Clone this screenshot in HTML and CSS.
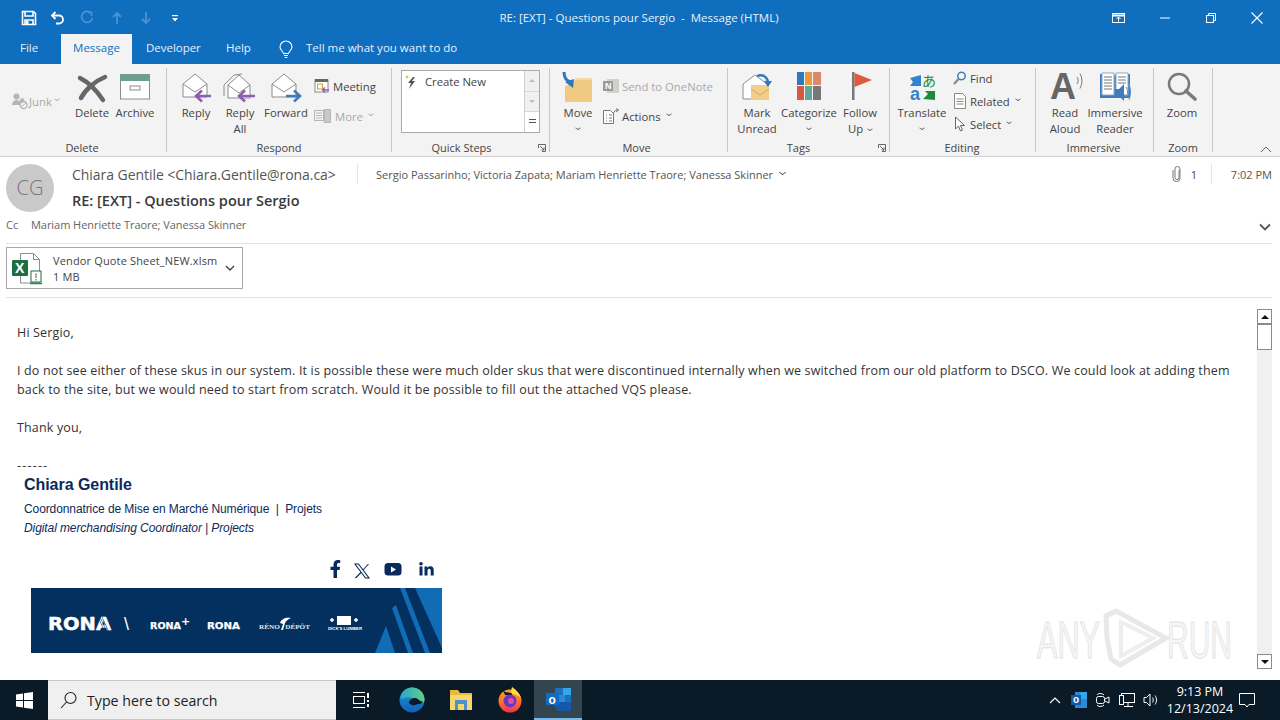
FILE: index.html
```html
<!DOCTYPE html>
<html lang="en">
<head>
<meta charset="utf-8">
<title>RE: [EXT] - Questions pour Sergio - Message (HTML)</title>
<link rel="stylesheet" href="styles.css">
</head>
<body>
<div class="window">
  <header class="titlebar">
    <div class="qat">
      <svg class="qat-save" width="16" height="16" viewBox="0 0 16 16" fill="none" stroke="#fff" stroke-width="1.6"><path d="M1.5 1.5h11l2 2v11h-13z"/><path d="M4 2v4h8V2M4 14.5V10h8v4.5" /><rect x="5" y="11" width="2.5" height="3.5" fill="#fff" stroke="none"/></svg>
      <svg class="qat-undo" width="16" height="16" viewBox="0 0 16 16" fill="none" stroke="#fff" stroke-width="1.8"><path d="M5.5 2 2 5.5 5.5 9"/><path d="M2.5 5.5h6.5a4 4 0 0 1 0 8H6"/></svg>
      <svg class="qat-redo" width="16" height="16" viewBox="0 0 16 16" fill="none" stroke="#4a93d2" stroke-width="1.7"><path d="M9 2.5h3.5V6"/><path d="M12 3A5.5 5.5 0 1 0 13.5 8"/></svg>
      <svg class="qat-up" width="12" height="14" viewBox="0 0 12 14" fill="none" stroke="#4a93d2" stroke-width="1.8"><path d="M6 13V2M2 6l4-4 4 4"/></svg>
      <svg class="qat-down" width="12" height="14" viewBox="0 0 12 14" fill="none" stroke="#4a93d2" stroke-width="1.8"><path d="M6 1v11M2 8l4 4 4-4"/></svg>
      <svg class="qat-more" width="8" height="8" viewBox="0 0 8 8" fill="#fff"><rect x="1" y="1" width="6" height="1.2"/><path d="M1 4h6L4 7.5z"/></svg>
    </div>
    <div class="title">RE: [EXT] - Questions pour Sergio &nbsp;-&nbsp; Message (HTML)</div>
    <div class="winctl">
      <svg class="win-pop" width="16" height="12" viewBox="0 0 16 12" fill="none" stroke="#fff"><rect x="1.5" y="1.5" width="12" height="9"/><path d="M1.5 3.5h12" stroke-width="2"/><path d="M7.5 9.5V5M5.5 7l2-2 2 2"/></svg>
      <svg width="12" height="12" viewBox="0 0 12 12" stroke="#fff"><path d="M1 6h10"/></svg>
      <svg width="12" height="12" viewBox="0 0 12 12" fill="none" stroke="#fff"><rect x="1.5" y="3.5" width="7" height="7"/><path d="M3.5 3.5v-2h7v7h-2"/></svg>
      <svg width="12" height="12" viewBox="0 0 12 12" stroke="#fff" stroke-width="1.1"><path d="M.5.5l11 11M11.500.5l-11 11"/></svg>
    </div>
  </header>

  <nav class="tabs">
    <span class="tab tab-file">File</span>
    <span class="tab tab-active">Message</span>
    <span class="tab tab-dev">Developer</span>
    <span class="tab tab-help">Help</span>
    <svg class="bulb" width="14" height="18" viewBox="0 0 14 18" fill="none" stroke="#fff" stroke-width="1.1"><path d="M4.500 12.500C4 10 1 9 1 6a6 6 0 0 1 12 0c0 3-3 4-3.500 6.500z"/><path d="M5 14.500h4M5.700 16.500h2.600"/></svg>
    <span class="tellme">Tell me what you want to do</span>
  </nav>

  <section class="ribbon">
    <div class="group g-delete">
      <div class="group-body">
        <div class="small-one dim junk">
          <svg width="18" height="18" viewBox="0 0 18 18" fill="#b5b5b5"><circle cx="5.500" cy="4.500" r="3"/><path d="M1 13c0-3 2-5 4.500-5S10 10 10 13z"/><circle cx="11" cy="8.500" r="2.300"/><circle cx="12.500" cy="13" r="3.500" fill="none" stroke="#b5b5b5" stroke-width="1.300"/><path d="M10 15l5-4" stroke="#b5b5b5"/></svg>
          <span>Junk</span><i class="caret"></i>
        </div>
        <div class="big w44">
          <svg class="ico" width="32" height="32" viewBox="0 0 32 32" fill="none" stroke="#666" stroke-width="4.500" stroke-linecap="round"><path d="M4 6c8 4 17 13 23 22"/><path d="M29 5C19 9 9 18 5 26"/></svg>
          <span>Delete</span>
        </div>
        <div class="big w42">
          <svg class="ico ico-arch" width="32" height="26" viewBox="0 0 32 26"><rect x="1.500" y="1" width="29" height="24" fill="#fff" stroke="#8c8c8c"/><rect x="1" y="0" width="30" height="7" fill="#6f9f8b"/><rect x="11" y="12" width="10" height="4" fill="none" stroke="#8c8c8c"/></svg>
          <span>Archive</span>
        </div>
      </div>
      <div class="group-label">Delete</div>
    </div>

    <div class="group g-respond">
      <div class="group-body">
        <div class="big w44">
          <svg class="ico" width="32" height="32" viewBox="0 0 32 32"><path d="M3 12 15 2l12 10v13H3z" fill="#fff" stroke="#8c8c8c"/><path d="M3 12l12 8 12-8" fill="none" stroke="#8c8c8c"/><path d="M17 24h14M22 18.500l-6 5.500 6 5.500" fill="none" stroke="#8e5fb0" stroke-width="2.600"/></svg>
          <span>Reply</span>
        </div>
        <div class="big w44">
          <svg class="ico" width="34" height="32" viewBox="0 0 34 32"><path d="M1 13 11 3l8-1" fill="none" stroke="#8c8c8c"/><path d="M1 13v11" fill="none" stroke="#8c8c8c"/><path d="M5 13 16 3l11 10v13H5z" fill="#fff" stroke="#8c8c8c"/><path d="M5 13l11 8 11-8" fill="none" stroke="#8c8c8c"/><path d="M17 24h15M22 18.500l-6 5.500 6 5.500" fill="none" stroke="#8e5fb0" stroke-width="2.600"/></svg>
          <span>Reply<br>All</span>
        </div>
        <div class="big w48">
          <svg class="ico" width="32" height="32" viewBox="0 0 32 32"><path d="M2 12 14 2l12 10v13H2z" fill="#fff" stroke="#8c8c8c"/><path d="M2 12l12 8 12-8" fill="none" stroke="#8c8c8c"/><path d="M16 24h14M24 18.500l6 5.500-6 5.500" fill="none" stroke="#3f7cb8" stroke-width="2.600"/></svg>
          <span>Forward</span>
        </div>
        <div class="small-col two">
          <div class="small">
            <svg width="16" height="16" viewBox="0 0 16 16"><rect x="1" y="2" width="13" height="12" fill="#fff" stroke="#888"/><rect x="1" y="1" width="13" height="3" fill="#666"/><rect x="3.500" y="6" width="5" height="5" fill="none" stroke="#d29b3a"/><path d="M8 12h7M11 9.500 8.500 12l2.500 2.500" fill="none" stroke="#8e5fb0" stroke-width="1.300"/></svg>
            <span>Meeting</span>
          </div>
          <div class="small dim">
            <svg width="18" height="16" viewBox="0 0 18 16" fill="none" stroke="#b5b5b5"><rect x=".5" y="2.500" width="9" height="10"/><path d="M2 5h6M2 7.500h6M2 10h6"/><rect x="10.500" y="1.500" width="6" height="13" fill="#c8c8c8"/></svg>
            <span>More</span><i class="caret"></i>
          </div>
        </div>
      </div>
      <div class="group-label">Respond</div>
    </div>

    <div class="group g-quick">
      <div class="quickbox">
        <div class="quick-list">
          <svg width="14" height="16" viewBox="0 0 14 16"><path d="M8 3 3 9h3l-2 6 6-8H7l3-4z" fill="#555"/><path d="M2 1l.7 1.500L4 3l-1.300.6L2 5l-.7-1.400L0 3l1.300-.5z" fill="#e0a94a"/></svg>
          <span>Create New</span>
        </div>
        <div class="quick-scroll">
          <b><i class="mini-up"></i></b>
          <b><i class="mini-down"></i></b>
          <b class="on"><i class="mini-more"></i></b>
        </div>
      </div>
      <div class="group-label">Quick Steps</div>
      <svg class="launcher" width="8" height="8" viewBox="0 0 8 8" fill="none" stroke="#666"><path d="M.5 4V.5H7.500V7.500H4M2 2l4 4M3.500 6H6V3.500"/></svg>
    </div>

    <div class="group g-move">
      <div class="group-body">
        <div class="big w52">
          <svg class="ico ico-top" width="32" height="32" viewBox="0 0 32 32"><path d="M13 6h17v10H13z" fill="#f4dba6"/><path d="M3 14l6-2 4-4h17v22H3z" fill="#f0ca80"/><path d="M2 0c0 5 2 9 7 10" fill="none" stroke="#2f78bd" stroke-width="3"/><path d="M3 10l9-3-1 9z" fill="#2f78bd"/></svg>
          <span>Move<i class="caret block"></i></span>
        </div>
        <div class="small-col two tight">
          <div class="small dim">
            <svg width="16" height="16" viewBox="0 0 16 16"><rect x="4" y="1" width="12" height="14" fill="#d0d0d0"/><rect x="0" y="3" width="10" height="10" fill="#9a9a9a"/><text x="2" y="11" class="mini-letter">N</text></svg>
            <span>Send to OneNote</span>
          </div>
          <div class="small">
            <svg width="16" height="16" viewBox="0 0 16 16" fill="none" stroke="#777"><path d="M.5 2.500h7l3 3v10H.5z" fill="#fff"/><path d="M3 7h1M6 7h3M3 10h1M6 10h3M3 13h1M6 13h3"/><path d="M10 6c1-3 3-4 5.500-4"/><path d="M13 .5l2.500 1.500L13 4"/></svg>
            <span>Actions</span><i class="caret"></i>
          </div>
        </div>
      </div>
      <div class="group-label">Move</div>
    </div>

    <div class="group g-tags">
      <div class="group-body">
        <div class="big w52">
          <svg class="ico" width="32" height="32" viewBox="0 0 32 32"><path d="M2 12 14 3l12 9v15H2z" fill="#fff" stroke="#8c8c8c"/><path d="M10 13h18v15H10z" fill="#f0cf8a"/><path d="M10 17l9 6 9-6" fill="none" stroke="#d6a75c"/><path d="M16 4c5-2 10 0 11 6" fill="none" stroke="#2f78bd" stroke-width="2.400"/><path d="M23 9h8l-4 6z" fill="#2f78bd"/></svg>
          <span>Mark<br>Unread</span>
        </div>
        <div class="big w52">
          <svg class="ico" width="24" height="28" viewBox="0 0 24 28"><rect width="7" height="13" fill="#2f78bd"/><rect x="8" width="7" height="13" fill="#e89a3c"/><rect x="16" width="8" height="13" fill="#d98a6c"/><rect y="14" width="7" height="14" fill="#d9573c"/><rect x="8" y="14" width="7" height="14" fill="#5fa898"/><rect x="16" y="14" width="8" height="14" fill="#777"/></svg>
          <span>Categorize<i class="caret block"></i></span>
        </div>
        <div class="big w50">
          <svg class="ico ico-flag" width="20" height="28" viewBox="0 0 20 28"><rect x="0" y="0" width="2.500" height="28" fill="#777"/><path d="M2.500 1 20 8 2.500 15z" fill="#dd5a3f"/></svg>
          <span>Follow<br>Up<i class="caret"></i></span>
        </div>
      </div>
      <div class="group-label">Tags</div>
      <svg class="launcher" width="8" height="8" viewBox="0 0 8 8" fill="none" stroke="#666"><path d="M.5 4V.5H7.500V7.500H4M2 2l4 4M3.500 6H6V3.500"/></svg>
    </div>

    <div class="group g-editing">
      <div class="group-body">
        <div class="big w52">
          <svg class="ico ico-tr" width="30" height="31" viewBox="0 0 30 31"><path d="M3 7l11-3v11H3l3-4z" fill="#2f84cc"/><text x="15" y="15" class="tr-ja">あ</text><text x="3" y="29" class="tr-a">a</text><path d="M16 28l5-5-3-3h10v9z" fill="#1f8a3c"/></svg>
          <span>Translate<i class="caret block"></i></span>
        </div>
        <div class="small-col three">
          <div class="small">
            <svg width="14" height="14" viewBox="0 0 14 14" fill="none"><circle cx="8.500" cy="5" r="3.700" stroke="#3f7cb8" stroke-width="1.500"/><path d="M1 13l4.500-5" stroke="#8a8a8a" stroke-width="2.200"/></svg>
            <span>Find</span>
          </div>
          <div class="small">
            <svg width="14" height="16" viewBox="0 0 14 16" fill="#fff" stroke="#888"><path d="M1.500.5h8l3 3v12h-11z"/><path d="M3.500 6h7M3.500 8.500h7M3.500 11h7" fill="none"/></svg>
            <span>Related</span><i class="caret"></i>
          </div>
          <div class="small">
            <svg width="14" height="16" viewBox="0 0 14 16" fill="#fff" stroke="#666"><path d="M2.500 1v12l3-3 2 5 2-1-2-4.500h4z"/></svg>
            <span>Select</span><i class="caret"></i>
          </div>
        </div>
      </div>
      <div class="group-label">Editing</div>
    </div>

    <div class="group g-immersive">
      <div class="group-body">
        <div class="big w50">
          <div class="readaloud">
            <span class="big-a">A</span>
            <svg width="8" height="18" viewBox="0 0 8 18" fill="none" stroke="#777"><path d="M1 5c1.500 2 1.500 5 0 7M4 1.500c2.500 4.500 2.500 10 0 15"/></svg>
          </div>
          <span>Read<br>Aloud</span>
        </div>
        <div class="big w50">
          <svg class="ico" width="32" height="30" viewBox="0 0 32 30"><path d="M1 2h14l1 2 1-2h14v24H1z" fill="#3f7cb8"/><path d="M3 1h12v22H3zM17 1h12v22H17z" fill="#fff" stroke="#8aa9c9"/><path d="M5 5h8M5 8h8M5 11h8M5 14h8M5 17h8M19 5h8M19 8h8M19 11h8" stroke="#777"/><path d="M16 17h4l5-5v17l-5-5h-4z" fill="#3f7cb8"/><path d="M27 15c2 3 2 7 0 10M30 12c2 5 2 11 0 16" fill="none" stroke="#5b94c9"/></svg>
          <span>Immersive<br>Reader</span>
        </div>
      </div>
      <div class="group-label">Immersive</div>
    </div>

    <div class="group g-zoom">
      <div class="group-body">
        <div class="big w50">
          <svg class="ico" width="30" height="30" viewBox="0 0 30 30" fill="none" stroke="#7a7a7a"><circle cx="12" cy="12" r="10" stroke-width="2.500"/><path d="M19 19l9 8" stroke-width="3.600" stroke-linecap="round"/></svg>
          <span>Zoom</span>
        </div>
      </div>
      <div class="group-label">Zoom</div>
    </div>

    <svg class="collapse" width="12" height="7" viewBox="0 0 12 7" fill="none" stroke="#666"><path d="M1 6l5-5 5 5"/></svg>
  </section>

  <section class="msg-head">
    <div class="head-top">
      <div class="avatar">CG</div>
      <div class="head-lines">
        <div class="line-sender">
          <span class="sender">Chiara Gentile &lt;Chiara.Gentile@rona.ca&gt;</span>
          <span class="vsep"></span>
          <span class="recipients">Sergio Passarinho; Victoria Zapata; Mariam Henriette Traore; Vanessa Skinner</span>
          <i class="caret dark"></i>
          <span class="meta">
            <svg width="10" height="16" viewBox="0 0 10 16" fill="none" stroke="#777"><path d="M7 4v7.500a2 2 0 0 1-4 0V3a2.500 2.500 0 0 1 5 .0v9a3.500 3.500 0 0 1-7 0V4"/></svg>
            <span class="count">1</span>
            <span class="vsep"></span>
            <span class="time">7:02 PM</span>
          </span>
        </div>
        <div class="subject">RE: [EXT] - Questions pour Sergio</div>
      </div>
    </div>
    <div class="cc-row">
      <span class="cc">Cc</span>
      <span class="cc-names">Mariam Henriette Traore; Vanessa Skinner</span>
      <svg class="cc-chev" width="12" height="8" viewBox="0 0 12 8" fill="none" stroke="#555" stroke-width="1.800"><path d="M1 1.500l5 5 5-5"/></svg>
    </div>
    <div class="attach-row">
      <div class="attach">
        <svg width="34" height="34" viewBox="0 0 34 34"><path d="M8.500 2.500h13l6 6v23.500h-19z" fill="#fff" stroke="#8c8c8c"/><path d="M21.500 2.500v6h6" fill="none" stroke="#8c8c8c"/><rect x="0" y="9" width="16" height="16" rx="1" fill="#1d6f42"/><text x="3" y="22" class="xl-x">X</text><rect x="19" y="20" width="10" height="11" fill="#fff" stroke="#1d6f42"/><path d="M24 22.500v4.500M24 28v1.500" stroke="#1d6f42"/><path d="M18 32.500h12" stroke="#1d8a5a" stroke-width="1.500"/></svg>
        <div class="attach-text">
          <div>Vendor Quote Sheet_NEW.xlsm</div>
          <div>1 MB</div>
        </div>
        <svg class="attach-chev" width="10" height="7" viewBox="0 0 10 7" fill="none" stroke="#444" stroke-width="1.400"><path d="M1 1l4 4 4-4"/></svg>
      </div>
    </div>
  </section>

  <main class="body">
    <article class="mail">
      <p>Hi Sergio,</p>
      <p>I do not see either of these skus in our system. It is possible these were much older skus that were discontinued internally when we switched from our old platform to DSCO. We could look at adding them back to the site, but we would need to start from scratch. Would it be possible to fill out the attached VQS please.</p>
      <p>Thank you,</p>
      <p class="dashes">------</p>
      <div class="sig">
        <div class="sig-name">Chiara Gentile</div>
        <div class="sig-role">Coordonnatrice de Mise en Marché Numérique &nbsp;|&nbsp; Projets</div>
        <div class="sig-role2">Digital merchandising Coordinator | Projects</div>
        <div class="social">
          <svg width="12" height="18" viewBox="0 0 12 18" fill="#0a2a5c"><path d="M3.500 18V10H.5V6.800h3V4.500C3.500 1.500 5.200 0 7.800 0c1.200 0 2.400.2 2.400.2v2.700H8.800c-1.400 0-1.800.8-1.800 1.700v2.200h3.100L9.600 10H7v8z"/></svg>
          <svg class="soc-x" width="16" height="16" viewBox="0 0 16 16" fill="none" stroke="#0a2a5c"><path d="M1 1h3.500l10.500 14h-3.500z" stroke-width="1.100"/><path d="M14.500 1 9 7M7 9.500 1.500 15" stroke-width="1.100"/></svg>
          <svg class="soc-yt" width="18" height="13" viewBox="0 0 18 13"><rect width="17" height="12.500" x=".5" rx="3.500" fill="#0a2a5c"/><path d="M7 3.500v6l5-3z" fill="#fff"/></svg>
          <svg class="soc-in" width="15" height="14" viewBox="0 0 15 14" fill="#0a2a5c"><rect x=".5" y="4.500" width="3" height="9"/><circle cx="2" cy="1.800" r="1.800"/><path d="M5.500 4.500h2.800v1.300C9 4.800 10 4.200 11.300 4.200c2.700 0 3.400 1.700 3.400 4.200v5.100h-3V9c0-1.100-.2-2.200-1.500-2.200S8.500 7.900 8.500 9v4.500h-3z"/></svg>
        </div>
        <svg class="banner" width="411" height="65" viewBox="0 0 411 65">
          <rect width="411" height="65" fill="#04305f"/>
          <path d="M384 0h27v60z" fill="#0f6cb5"/>
          <path d="M369 0h5l25 65h-5z" fill="#0f6cb5"/>
          <path d="M361 20l4-3 17 48h-5z" fill="#0f6cb5"/>
          <path d="M344 65l11-27 9 27z" fill="#0f6cb5"/>
          <text x="17" y="42" textLength="63" lengthAdjust="spacingAndGlyphs" class="b-rona">RONA</text>
          <path d="M73 42l-6-13 2 0 6 13zM77 42l-6-13" fill="none" stroke="#04305f" stroke-width=".6"/>
          <text x="93" y="42" class="b-slash">\</text>
          <text x="119" y="41" textLength="31" lengthAdjust="spacingAndGlyphs" class="b-small">RONA</text>
          <text x="150" y="37" class="b-plus">+</text>
          <text x="176" y="41" textLength="33" lengthAdjust="spacingAndGlyphs" class="b-small">RONA</text>
          <text x="228" y="41" textLength="51" lengthAdjust="spacingAndGlyphs" class="b-reno">RÉNO&#160;&#160;&#160;DÉPÔT</text>
          <path d="M249 35c1-4 6-6 11-5-3 1-5 3-6 5l-2 7h-2l2-6z" fill="#fff"/>
          <rect x="306" y="28" width="14" height="9" fill="#fff"/>
          <path d="M299 32h4M301 30v4M323 32h4M325 30v4" stroke="#fff" stroke-width="1.500"/>
          <text x="297" y="41.500" textLength="34" lengthAdjust="spacingAndGlyphs" class="b-dick">DICK'S LUMBER</text>
        </svg>
      </div>
    </article>
    <div class="scrollbar">
      <b class="sb-btn"><i class="mini-up dark"></i></b>
      <b class="sb-thumb"></b>
      <span class="sb-track"></span>
      <b class="sb-btn"><i class="mini-down dark"></i></b>
    </div>
    <svg class="watermark" width="210" height="70" viewBox="0 0 210 70">
      <text x="0" y="50" textLength="63" lengthAdjust="spacingAndGlyphs" class="wm">ANY</text>
      <path d="M70 30 69 8l10-5 50 27-46 27-9-6z" fill="none" stroke="#e8e8e8" stroke-width="5"/>
      <path d="M84 14v34l32-18z" fill="none" stroke="#eeeeee" stroke-width="4"/>
      <text x="130" y="50" textLength="65" lengthAdjust="spacingAndGlyphs" class="wm">RUN</text>
    </svg>
  </main>

  <footer class="taskbar">
    <div class="start">
      <svg width="17" height="17" viewBox="0 0 17 17" fill="#fff"><path d="M0 2.400 7 1.400V8H0zM8 1.300 17 0V8H8zM0 9h7v6.600L0 14.600zM8 9h9v8l-9-1.300z"/></svg>
    </div>
    <div class="search">
      <svg width="18" height="18" viewBox="0 0 18 18" fill="none" stroke="#222" stroke-width="1.100"><circle cx="10.500" cy="7" r="5.500"/><path d="M6.500 11 1 17"/></svg>
      <span>Type here to search</span>
    </div>
    <div class="tb-btn tb-first">
      <svg width="16" height="16" viewBox="0 0 16 16" fill="none" stroke="#fff"><path d="M0 .5h12M0 15.500h12"/><rect x=".5" y="4.500" width="11" height="7"/><path d="M15 1v5M15 8v2M15 12v3" stroke-width="2"/></svg>
    </div>
    <div class="tb-btn">
      <svg width="26" height="26" viewBox="0 0 26 26"><defs><linearGradient id="e1" x1="0" y1="0" x2="0" y2="1"><stop offset="0" stop-color="#1f9ad6"/><stop offset="1" stop-color="#0f5fb8"/></linearGradient><linearGradient id="e2" x1="0" y1="0" x2="1" y2="0"><stop offset="0" stop-color="#2aa6c8"/><stop offset="1" stop-color="#5fd08a"/></linearGradient></defs><circle cx="13" cy="13" r="12.500" fill="url(#e1)"/><path d="M1.500 11C3 4 8 .5 13 .5c7 0 12.500 5.500 12.500 12 0 2-.5 3-2 3.500-3 .8-4-1-6-3-2-2-8-4-12-2-2 1-3 1.500-4 0z" fill="url(#e2)"/><path d="M10 15c1-3 5-5 8-3.500 2 1 3 3 6 3-1 2-3 3-5 2.500-1 .5-5 2-6 1-2-.5-3-1.500-3-3z" fill="#0a1a26"/></svg>
    </div>
    <div class="tb-btn">
      <svg width="24" height="20" viewBox="0 0 24 20"><path d="M1 0h8l2 3h12v17H1z" fill="#e8b93c"/><path d="M1 5h22v15H1z" fill="#f6d76f"/><rect x="6" y="10" width="12" height="10" fill="#4a90c9"/><rect x="9" y="14" width="6" height="6" fill="#f6d76f"/></svg>
    </div>
    <div class="tb-btn">
      <svg width="24" height="26" viewBox="0 0 24 26"><defs><linearGradient id="f1" x1="0" y1="0" x2="0" y2="1"><stop offset="0" stop-color="#ffa52b"/><stop offset=".6" stop-color="#ff6a2a"/><stop offset="1" stop-color="#f0304e"/></linearGradient></defs><circle cx="12" cy="14" r="11.500" fill="url(#f1)"/><path d="M5 3c2 3 5 2 8 3 2 1 1 3 0 3L7 8z" fill="#0a1a26"/><path d="M14 0c3 2 7 5 9 11-3-3-6-4-9-4-1-2-1-4 0-7z" fill="#ffd83a"/><circle cx="12" cy="14" r="6.500" fill="#6a35c8"/><circle cx="13" cy="14" r="3" fill="#e0529c"/></svg>
    </div>
    <div class="tb-btn tb-active">
      <svg width="25" height="23" viewBox="0 0 25 23"><rect x="9" y="0" width="16" height="19" fill="#1f6fc0"/><rect x="17" y="0" width="8" height="7" fill="#35a6e8"/><rect x="13" y="7" width="6" height="7" fill="#2b8ad6"/><path d="M9 14h16v9H11z" fill="#1557a8"/><rect x="0" y="5" width="13" height="12" rx="1" fill="#0f6cc0"/><text x="2.500" y="15.500" class="ol-o">o</text></svg>
    </div>
    <div class="tray">
      <svg class="tray-chev" width="12" height="8" viewBox="0 0 12 8" fill="none" stroke="#fff" stroke-width="1.200"><path d="M1 7l5-5 5 5"/></svg>
      <svg width="16" height="16" viewBox="0 0 16 16"><rect x="4" y="0" width="12" height="16" fill="#2b8ad6"/><rect x="9" y="0" width="7" height="7" fill="#35a6e8"/><rect x="0" y="3" width="10" height="10" fill="#0f5aa8"/><text x="2" y="11" class="ol-o small-o">o</text></svg>
      <svg width="16" height="16" viewBox="0 0 16 16" fill="none" stroke="#fff"><path d="M2 3c1-2 5-2 7 0M2 13c1 2 5 2 7 0"/><rect x="1.500" y="4.500" width="8" height="7" rx="2"/><path d="M10 7l4-2v6l-4-2"/></svg>
      <svg width="16" height="16" viewBox="0 0 16 16" fill="none" stroke="#fff"><rect x="2.500" y="1.500" width="13" height="9"/><rect x=".5" y="3.500" width="4" height="9" fill="#0a1a26"/><path d="M9 11v3M5 14.500h9"/></svg>
      <svg width="16" height="16" viewBox="0 0 16 16" fill="none" stroke="#fff"><path d="M1 5.500h2.500L7 2v12l-3.500-3.500H1z"/><path d="M9.500 5.500c1 1.500 1 3.500 0 5M12 3.500c2 3 2 6 0 9"/></svg>
      <div class="clock"><div>9:13 PM</div><div>12/13/2024</div></div>
      <svg class="notif" width="16" height="16" viewBox="0 0 16 16" fill="none" stroke="#fff"><path d="M.5 1.500h15v11H10L8 15l-2-2.500H.5z"/></svg>
    </div>
  </footer>
</div>
</body>
</html>
```
FILE: styles.css
```css
* { box-sizing: border-box; }
html, body { margin: 0; height: 100%; }
body { font-family: "Open Sans", "Noto Sans", sans-serif; font-size: 12px; color: #444; background: #fff; overflow: hidden; }
.window { width: 1280px; height: 720px; display: flex; flex-direction: column; overflow: hidden; }
svg { display: block; flex: none; overflow: visible; }

/* title bar */
.titlebar { height: 36px; flex: none; background: #106ebe; display: flex; align-items: center; position: relative; color: #e8f1f9; }
.qat { display: flex; align-items: center; padding-left: 21px; }
.qat-undo { margin-left: 13px; }
.qat-redo { margin-left: 13px; }
.qat-up { margin-left: 16px; }
.qat-down { margin-left: 17px; }
.qat-more { margin-left: 19px; }
.title { position: absolute; left: 0; right: 2px; text-align: center; font-size: 11.5px; top: 10px; }
.winctl { margin-left: auto; display: flex; align-items: center; gap: 34px; padding-right: 17px; }
.win-pop { margin-right: -2px; }

/* tabs */
.tabs { height: 28px; flex: none; background: #106ebe; display: flex; align-items: flex-end; color: #e8f1f9; position: relative; }
.tab { height: 30px; line-height: 28px; font-size: 11.5px; flex: none; }
.tab-file { margin-left: 20px; width: 41px; }
.tab-active { width: 71px; margin-top: -2px; background: #f3f3f3; color: #106ebe; text-align: center; }
.tab-dev { margin-left: 14px; width: 80px; letter-spacing: -.03px; }
.tab-help { width: 53px; }
.bulb { margin-bottom: 5px; }
.tellme { margin-left: 13px; height: 30px; line-height: 28px; font-size: 11.5px; }

/* ribbon */
.ribbon { height: 93px; flex: none; background: #f3f3f3; border-bottom: 1px solid #d0d0d0; display: flex; align-items: flex-start; padding-top: 4px; position: relative; font-size: 11.3px; color: #444; }
.group { height: 84px; flex: none; border-right: 1px solid #c8c8c8; position: relative; }
.group-body { display: flex; height: 72px; }
.group-label { position: absolute; left: 0; right: 0; top: 72px; height: 16px; line-height: 16px; text-align: center; font-size: 11px; }
.g-delete { width: 167px; padding-left: 6px; }
.g-respond { width: 225px; padding-left: 7px; }
.g-quick { width: 158px; padding-left: 9px; }
.g-move { width: 178px; padding-left: 2px; }
.g-tags { width: 162px; padding-left: 3px; }
.g-editing { width: 146px; padding-left: 6px; }
.g-immersive { width: 118px; padding-left: 4px; }
.g-zoom { width: 59px; padding-left: 3px; }
.g-delete .group-label { right: 2px; }
.g-quick .group-label { right: 18px; }
.g-move .group-label { right: 4px; }
.g-tags .group-label { right: 20px; }
.g-editing .group-label { right: 1px; }
.g-immersive .group-label { right: 2px; }
.big { display: flex; flex-direction: column; align-items: center; flex: none; height: 72px; line-height: 15.500px; text-align: center; white-space: nowrap; }
.big > span { display: block; height: 35px; }
.big > span > .caret:not(.block) { margin-left: 5px; }
.ico { margin-top: 4px; margin-bottom: auto; }
.ico-arch { margin-top: 6px; }
.ico-top { margin-top: 4px; }
.ico-flag { margin-left: 4px; }
.ico-tr { margin-top: 3px; }
.w42 { width: 42px; } .w44 { width: 44px; } .w48 { width: 48px; } .w50 { width: 50px; } .w52 { width: 52px; }
.small-one { display: flex; align-items: center; width: 59px; height: 22px; margin-top: 22px; margin-left: 5px; flex: none; }
.small-col { display: flex; flex-direction: column; flex: none; }
.small-col.two { gap: 8px; padding-top: 7px; margin-left: 4px; }
.small-col.two.tight { margin-left: -1px; }
.small-col.three { gap: 1px; margin-top: -1px; margin-left: 5px; }
.small { display: flex; align-items: center; gap: 3px; height: 22px; white-space: nowrap; }
.dim { color: #a8a8a8; }
.caret { display: inline-block; width: 4px; height: 4px; border-right: 1px solid #666; border-bottom: 1px solid #666; transform: scale(1,.7) rotate(45deg); margin-left: 3px; position: relative; top: -2px; }
.dim .caret { border-color: #aaa; }
.caret.block { display: block; margin: 5px auto 0; top: 0; }
.caret.dark { border-color: #444; margin-left: 7px; width: 5px; height: 5px; }
.launcher { position: absolute; right: 3px; top: 76px; }
.collapse { position: absolute; right: 8px; top: 82px; }
.quickbox { display: flex; width: 139px; height: 63px; margin-top: 2px; border: 1px solid #ababab; background: #fff; }
.quick-list { flex: 1; display: flex; align-items: flex-start; gap: 6px; padding: 3px 0 0 3px; line-height: 16px; }
.quick-list span { letter-spacing: -.04px; }
.quick-scroll { width: 15px; display: flex; flex-direction: column; border-left: 1px solid #d0d0d0; }
.quick-scroll b { flex: 1; background: #f0f0f0; border-bottom: 1px solid #d8d8d8; display: flex; align-items: center; justify-content: center; }
.quick-scroll b.on { background: #fff; border-bottom: 0; }
.mini-up, .mini-down { width: 0; height: 0; border-left: 3px solid transparent; border-right: 3px solid transparent; }
.mini-up { border-bottom: 3px solid #bdbdbd; }
.mini-down { border-top: 3px solid #bdbdbd; }
.mini-up.dark { border-bottom: 4px solid #111; border-left-width: 4px; border-right-width: 4px; }
.mini-down.dark { border-top: 4px solid #111; border-left-width: 4px; border-right-width: 4px; }
.mini-more { width: 7px; height: 7px; border-top: 1px solid #555; background: linear-gradient(#555,#555) center 2px/7px 1px no-repeat; position: relative; }
.mini-letter { font: bold 9px "Liberation Sans", sans-serif; fill: #fff; }
.tr-ja { font: 14px "Noto Sans CJK JP", sans-serif; fill: #1f8a3c; }
.tr-a { font: bold 18px "Liberation Sans", sans-serif; fill: #2f84cc; }
.readaloud { display: flex; align-items: flex-start; height: 37px; margin-left: 4px; margin-bottom: auto; }
.big-a { font: bold 36px/37px "Liberation Sans", sans-serif; color: #666; }
.readaloud svg { margin-top: 4px; }

/* message header */
.msg-head { flex: none; height: 141px; display: flex; flex-direction: column; background: #fff; }
.head-top { display: flex; padding: 7px 8px 0 6px; height: 60px; }
.avatar { width: 48px; height: 48px; border-radius: 50%; background: #c9c9c9; color: #777; font-size: 20px; font-weight: 300; line-height: 48px; text-align: center; flex: none; }
.head-lines { flex: 1; margin-left: 18px; display: flex; flex-direction: column; }
.line-sender { display: flex; align-items: center; height: 20px; }
.sender { font-size: 14px; color: #555; width: 285px; white-space: nowrap; letter-spacing: -.05px; }
.vsep { width: 1px; height: 20px; background: #e4e4e4; flex: none; }
.recipients { margin-left: 18px; font-size: 11px; color: #555; white-space: nowrap; }
.meta { margin-left: auto; display: flex; align-items: center; }
.count { margin-left: 9px; width: 20px; font-size: 11px; }
.time { margin-left: 19px; font-size: 11px; color: #555; }
.subject { font-size: 14.500px; font-weight: 600; color: #3a3a3a; margin-top: 7px; line-height: 20px; white-space: nowrap; }
.cc-row { display: flex; align-items: center; height: 19px; margin-top: -2px; padding: 0 8px 0 6px; font-size: 11px; color: #666; }
.cc { width: 25px; }
.cc-names { letter-spacing: -.05px; }
.cc-chev { margin-left: auto; margin-right: 1px; margin-top: 5px; }
.attach-row { margin: 9px 8px 0 6px; border-top: 1px solid #e2e2e2; border-bottom: 1px solid #e2e2e2; height: 55px; padding-top: 3px; }
.attach { width: 237px; height: 42px; border: 1px solid #a8a8a8; display: flex; align-items: center; padding-left: 5px; }
.attach-text { margin-left: 7px; margin-top: 2px; font-size: 11px; line-height: 16px; color: #444; white-space: nowrap; letter-spacing: .15px; }
.attach-chev { margin-left: auto; margin-right: 7px; }

/* body */
.body { flex: 1; min-height: 0; position: relative; display: flex; overflow: hidden; }
.mail { flex: 1; min-width: 0; padding: 25px 18px 0 17px; font-size: 12.500px; line-height: 19px; color: #333; letter-spacing: .16px; }
.mail p { margin: 0 0 19px; }
.mail p.dashes { margin: 0; letter-spacing: 1.200px; }
.sig { padding-left: 7px; font-family: "Liberation Sans", Arial, sans-serif; color: #0a2a5c; letter-spacing: 0; }
.sig-name { font-size: 16px; font-weight: 700; line-height: 18px; margin-top: 1px; letter-spacing: -.05px; }
.sig-role { font-size: 12px; line-height: 18px; margin-top: 6px; letter-spacing: -.1px; }
.sig-role2 { font-size: 12px; line-height: 18px; margin-top: 1px; font-style: italic; letter-spacing: -.09px; }
.social { display: flex; align-items: center; height: 20px; margin-top: 22px; padding-left: 306px; }
.soc-x { margin-left: 12px; margin-top: 3px; }
.soc-yt { margin-left: 14px; }
.soc-in { margin-left: 17px; margin-top: -1px; }
.banner { margin-top: 9px; margin-left: 7px; }
.b-rona { font: 700 18px "DejaVu Sans", sans-serif; fill: #fff; stroke: #fff; stroke-width: .5; }
.b-slash { font: 400 18px "Liberation Sans", sans-serif; fill: #fff; }
.b-small { font: 700 9.500px "DejaVu Sans", sans-serif; fill: #fff; stroke: #fff; stroke-width: .25; }
.b-plus { font: 700 11px "DejaVu Sans", sans-serif; fill: #fff; }
.b-reno { font: 700 6px "Liberation Serif", serif; fill: #e0e6ee; }
.b-dick { font: 700 4px "Liberation Sans", sans-serif; fill: #fff; }
.scrollbar { width: 15px; flex: none; margin: 11px 8px 11px 0; display: flex; flex-direction: column; background: #f0f0f0; }
.sb-btn { height: 15px; flex: none; background: #fff; border: 1px solid #8a8a8a; display: flex; align-items: center; justify-content: center; }
.sb-thumb { height: 26px; flex: none; background: #fff; border: 1px solid #8a8a8a; }
.sb-track { flex: 1; }
.watermark { position: absolute; left: 1037px; top: 310px; }
.wm { font: 400 52px "Liberation Sans", sans-serif; fill: #f6f6f6; stroke: #e2e2e2; stroke-width: 1; }

/* taskbar */
.taskbar { height: 40px; flex: none; background: #0a1a26; display: flex; align-items: stretch; color: #fff; }
.start { width: 48px; display: flex; align-items: center; justify-content: center; }
.search { width: 288px; background: #f0f0f0; border: 1px solid #c8c8c8; border-width: 1px 0; display: flex; align-items: center; padding-left: 12px; gap: 9px; color: #222; font-size: 14.200px; }
.tb-btn { width: 49px; display: flex; align-items: center; justify-content: center; }
.tb-first { margin-right: 2px; }
.tb-active { width: 48px; background: #33454f; border-bottom: 2px solid #76b9ed; }
.tray { margin-left: auto; display: flex; align-items: center; gap: 8px; padding-right: 25px; }
.tray-chev { margin-right: 2px; }
.clock { width: 72px; margin-left: -3px; margin-right: -5px; text-align: center; font-size: 12.500px; line-height: 17px; }
.ol-o { font: bold 12px "Liberation Sans", sans-serif; fill: #fff; }
.small-o { font-size: 10px; }
.xl-x { font: bold 14px "Liberation Sans", sans-serif; fill: #fff; }
```
